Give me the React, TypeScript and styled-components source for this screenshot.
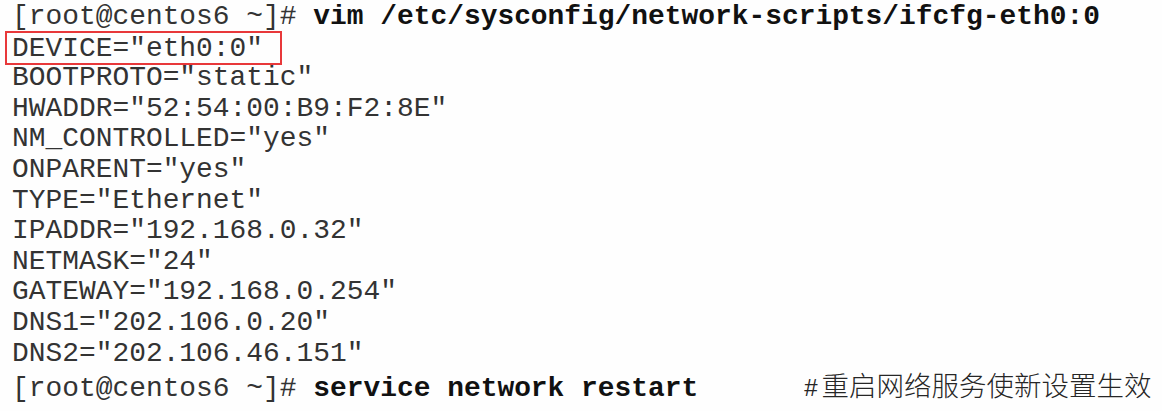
import React from "react";
import styled, { createGlobalStyle } from "styled-components";

const Global = createGlobalStyle`
  html, body { margin: 0; padding: 0; background: #ffffff; }
`;

const Page = styled.div`
  width: 1162px;
  height: 411px;
  box-sizing: border-box;
  padding: 2px 0 0 12px;
  background: #fefefe;
  font-family: "Liberation Mono", "Courier New", monospace;
  font-size: 27.9px;
  color: #333333;
  overflow: hidden;
`;

const Line = styled.div<{ $boxed?: boolean }>`
  display: flex;
  align-items: baseline;
  height: 30.6px;
  line-height: 30.6px;
  white-space: pre;
  ${(p) =>
    p.$boxed &&
    `
    box-sizing: border-box;
    width: 277px;
    height: 34px;
    line-height: 29px;
    margin: -2px 0 -1.4px -7px;
    padding: 1px 0 0 5px;
    border: 2.5px solid #e8383a;
  `}
`;

const Cmd = styled.span`
  font-weight: 700;
  color: #111111;
`;

const Comment = styled.span`
  margin-left: 106px;
  font-family: "Noto Sans CJK SC", "Noto Sans", sans-serif;
  font-size: 27.5px;
  font-weight: 300;
  color: #262626;
`;

const Hash = styled.span`
  font-family: "Liberation Sans", sans-serif;
  font-size: 24px;
  margin-right: 4px;
`;

const prompt = "[root@centos6 ~]# ";

const config = [
  'BOOTPROTO="static"',
  'HWADDR="52:54:00:B9:F2:8E"',
  'NM_CONTROLLED="yes"',
  'ONPARENT="yes"',
  'TYPE="Ethernet"',
  'IPADDR="192.168.0.32"',
  'NETMASK="24"',
  'GATEWAY="192.168.0.254"',
  'DNS1="202.106.0.20"',
  'DNS2="202.106.46.151"',
];

export default function App() {
  return (
    <>
      <Global />
      <Page>
        <Line>
          {prompt}
          <Cmd>vim /etc/sysconfig/network-scripts/ifcfg-eth0:0</Cmd>
        </Line>
        <Line $boxed>DEVICE="eth0:0"</Line>
        {config.map((c) => (
          <Line key={c}>{c}</Line>
        ))}
        <Line>
          {prompt}
          <Cmd>service network restart</Cmd>
          <Comment>
            <Hash>#</Hash>重启网络服务使新设置生效
          </Comment>
        </Line>
      </Page>
    </>
  );
}
